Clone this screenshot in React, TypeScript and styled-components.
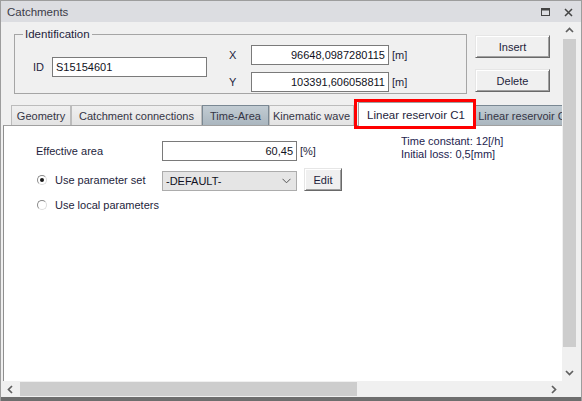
import React from 'react';
import styled, { createGlobalStyle } from 'styled-components';

const Global = createGlobalStyle`
  html, body { margin: 0; padding: 0; background: #ffffff; }
  body { font-family: "Liberation Sans", Arial, sans-serif; font-size: 11px; }
  * { box-sizing: border-box; }
`;

const Window = styled.div`
  width: 582px;
  height: 401px;
  display: flex;
  flex-direction: column;
  background: #f0f0f0;
  border: 1px solid #9d9d9d;
  border-bottom: none;
  overflow: hidden;
`;

const TitleBar = styled.div`
  height: 21px;
  flex-shrink: 0;
  display: flex;
  align-items: center;
  justify-content: space-between;
  padding: 1px 8px 0 6px;
  background: #dcdde1;
  color: #3b3b48;
  font-size: 11.5px;
`;

const TitleButtons = styled.div`
  display: flex;
  align-items: center;
  gap: 14px;
`;

const Middle = styled.div`
  flex: 1;
  min-height: 0;
  display: flex;
`;

const Viewport = styled.div`
  width: 561px;
  flex-shrink: 0;
  overflow: hidden;
  background: #f0f0f0;
`;

const HeaderRow = styled.div`
  display: flex;
  align-items: flex-start;
  padding: 5px 0 0 13px;
`;

const GroupBox = styled.fieldset`
  width: 453px;
  margin: 0;
  padding: 4px 0 1px 0;
  border: 1px solid #a5a5a5;
  min-inline-size: 0;
`;

const Legend = styled.legend`
  margin-left: 8px;
  padding: 0 2px;
  line-height: 14px;
  color: #1e1e3c;
  font-size: 11.5px;
`;

const GroupInner = styled.div`
  display: flex;
  align-items: flex-start;
`;

const IdRow = styled.div`
  display: flex;
  align-items: center;
  margin: 12px 0 0 18px;
`;

const FieldLabel = styled.span`
  color: #1e1e3c;
  white-space: nowrap;
`;

const TextBox = styled.div<{ $w: number; $align?: 'left' | 'right' }>`
  width: ${(p) => p.$w}px;
  height: 20px;
  border: 1px solid #7a7a7a;
  background: #ffffff;
  padding: 0 3px;
  line-height: 18px;
  text-align: ${(p) => p.$align ?? 'left'};
  color: #111122;
  white-space: nowrap;
  overflow: hidden;
`;

const IdBox = styled(TextBox)`
  margin-left: 8px;
`;

const CoordGrid = styled.div`
  display: grid;
  grid-template-columns: 22px 138px auto;
  grid-template-rows: 20px 20px;
  row-gap: 7px;
  align-items: center;
  margin-left: 22px;
`;

const Unit = styled.span`
  margin-left: 3px;
  color: #1e1e3c;
`;

const ButtonColumn = styled.div`
  display: flex;
  flex-direction: column;
  gap: 11px;
  margin: 8px 0 0 8px;
`;

const PushButton = styled.button<{ $w: number }>`
  width: ${(p) => p.$w}px;
  height: 23px;
  padding: 0;
  font: inherit;
  color: #1e1e3c;
  background: #f0f0f0;
  border: 1px solid;
  border-color: #e6e6e6 #696969 #696969 #e6e6e6;
  box-shadow: inset 1px 1px #ffffff, inset -1px -1px #a0a0a0;
`;

const TabControl = styled.div`
  position: relative;
  width: 600px;
  margin: 8px 0 0 2px;
`;

const TabStrip = styled.div`
  height: 23px;
  display: flex;
  align-items: flex-end;
  padding-left: 8px;
`;

type TabKind = 'plain' | 'tinted' | 'active';

const Tab = styled.div<{ $w: number; $kind: TabKind }>`
  flex-shrink: 0;
  width: ${(p) => p.$w}px;
  height: ${(p) => (p.$kind === 'active' ? 24 : 20)}px;
  margin: ${(p) => (p.$kind === 'active' ? '0 1px -1px 4px' : '0')};
  position: relative;
  z-index: ${(p) => (p.$kind === 'active' ? 1 : 0)};
  display: flex;
  align-items: center;
  justify-content: center;
  padding-top: ${(p) => (p.$kind === 'active' ? 0 : 1)}px;
  white-space: nowrap;
  overflow: hidden;
  border: 1px solid;
  border-bottom: none;
  border-color: ${(p) =>
    p.$kind === 'tinted' ? '#7a8893' : p.$kind === 'active' ? '#a0a0a0' : '#bcbcbc'};
  background: ${(p) =>
    p.$kind === 'tinted'
      ? 'linear-gradient(#c2ccd3, #aab6bf)'
      : p.$kind === 'active'
      ? '#ffffff'
      : 'linear-gradient(#f0f0f0, #e3e3e3)'};
  color: ${(p) => (p.$kind === 'active' ? '#1e1e3c' : '#353545')};
  font-size: ${(p) => (p.$kind === 'active' ? '11.5px' : '11px')};
`;

const Highlight = styled.div`
  position: absolute;
  left: 351px;
  top: -3px;
  width: 122px;
  height: 30px;
  border: 3px solid #ff0000;
  z-index: 2;
  pointer-events: none;
`;

const TabPage = styled.div`
  height: 300px;
  background: #ffffff;
  border-top: 1px solid #a0a0a0;
  border-left: 1px solid #8f8f8f;
  display: flex;
  align-items: flex-start;
`;

const FormGrid = styled.div`
  width: 365px;
  margin: 15px 0 0 32px;
  display: grid;
  grid-template-columns: 126px 135px auto;
  grid-template-rows: 20px 23px 14px;
  row-gap: 7px;
  align-items: center;
`;

const RadioOption = styled.label<{ $span?: number }>`
  grid-column: span ${(p) => p.$span ?? 1};
  display: flex;
  align-items: center;
  gap: 8px;
  margin-left: 1px;
  color: #1e1e3c;
  white-space: nowrap;
`;

const RadioCircle = styled.span<{ $checked?: boolean }>`
  width: 10px;
  height: 10px;
  border-radius: 50%;
  border: 1px solid;
  border-color: #8a8a8a #dcdcdc #dcdcdc #8a8a8a;
  background: #ffffff;
  display: inline-flex;
  align-items: center;
  justify-content: center;
  &::after {
    content: '';
    width: 4px;
    height: 4px;
    border-radius: 50%;
    background: ${(p) => (p.$checked ? '#1a1a1a' : 'transparent')};
  }
`;

const Combo = styled.div`
  align-self: end;
  width: 135px;
  height: 20px;
  display: flex;
  align-items: center;
  justify-content: space-between;
  padding: 0 5px 0 3px;
  background: #e5e5e5;
  border: 1px solid #acacac;
  color: #111122;
`;

const TrailCell = styled.div`
  display: flex;
  align-items: center;
`;

const EditButton = styled(PushButton)`
  margin-left: 7px;
`;

const InfoBlock = styled.div`
  margin-top: 9px;
  line-height: 13px;
  color: #24244f;
`;

const VScroll = styled.div`
  width: 19px;
  flex-shrink: 0;
  display: flex;
  flex-direction: column;
  padding: 0 5px 0 1px;
  background: #f0f0f0;
`;

const ArrowCell = styled.div<{ $size: number }>`
  flex: 0 0 ${(p) => p.$size}px;
  display: flex;
  align-items: center;
  justify-content: center;
`;

const VThumb = styled.div`
  height: 308px;
  flex-shrink: 0;
  background: #cdcdcd;
`;

const Track = styled.div`
  flex: 1;
`;

const BottomRow = styled.div`
  height: 16px;
  flex-shrink: 0;
  display: flex;
`;

const HScroll = styled.div`
  width: 561px;
  display: flex;
  padding: 1px 0 1px 0;
  background: #f0f0f0;
`;

const HThumb = styled.div`
  width: 337px;
  flex-shrink: 0;
  background: #cdcdcd;
`;

const Corner = styled.div`
  flex: 1;
  background: #f0f0f0;
`;

const BottomEdge = styled.div`
  height: 4px;
  flex-shrink: 0;
  margin: 0 -1px;
  background: #6e6e6e;
`;

type Dir = 'up' | 'down' | 'left' | 'right';

const CHEVRONS: Record<Dir, string> = {
  up: '1,6 4.5,2.5 8,6',
  down: '1,3 4.5,6.5 8,3',
  left: '6,1 2.5,4.5 6,8',
  right: '3,1 6.5,4.5 3,8',
};

const Chevron = ({ dir }: { dir: Dir }) => (
  <svg width={9} height={9} viewBox="0 0 9 9">
    <polyline points={CHEVRONS[dir]} fill="none" stroke="#5f5f5f" strokeWidth={1.7} />
  </svg>
);

const ComboArrow = () => (
  <svg width={9} height={6} viewBox="0 0 9 6">
    <polyline points="0.5,0.8 4.5,4.8 8.5,0.8" fill="none" stroke="#555555" strokeWidth={1} />
  </svg>
);

const MaximizeIcon = () => (
  <svg width={9} height={8} viewBox="0 0 9 8">
    <rect x={0.5} y={0.5} width={8} height={7} fill="none" stroke="#444" strokeWidth={1} />
    <line x1={0} y1={1.5} x2={9} y2={1.5} stroke="#444" strokeWidth={2} />
  </svg>
);

const CloseIcon = () => (
  <svg width={9} height={9} viewBox="0 0 9 9">
    <path d="M1 1 L8 8 M8 1 L1 8" stroke="#444" strokeWidth={1.5} />
  </svg>
);

const tabs: { label: string; width: number; kind: TabKind }[] = [
  { label: 'Geometry', width: 60, kind: 'plain' },
  { label: 'Catchment connections', width: 131, kind: 'plain' },
  { label: 'Time-Area', width: 67, kind: 'tinted' },
  { label: 'Kinematic wave', width: 85, kind: 'plain' },
  { label: 'Linear reservoir C1', width: 116, kind: 'active' },
  { label: 'Linear reservoir C2', width: 100, kind: 'tinted' },
];

export default function App() {
  return (
    <>
      <Global />
      <Window>
        <TitleBar>
          <span>Catchments</span>
          <TitleButtons>
            <MaximizeIcon />
            <CloseIcon />
          </TitleButtons>
        </TitleBar>

        <Middle>
          <Viewport>
            <HeaderRow>
              <GroupBox>
                <Legend>Identification</Legend>
                <GroupInner>
                  <IdRow>
                    <FieldLabel>ID</FieldLabel>
                    <IdBox $w={155}>S15154601</IdBox>
                  </IdRow>
                  <CoordGrid>
                    <FieldLabel>X</FieldLabel>
                    <TextBox $w={138} $align="right">96648,0987280115</TextBox>
                    <Unit>[m]</Unit>
                    <FieldLabel>Y</FieldLabel>
                    <TextBox $w={138} $align="right">103391,606058811</TextBox>
                    <Unit>[m]</Unit>
                  </CoordGrid>
                </GroupInner>
              </GroupBox>
              <ButtonColumn>
                <PushButton $w={75}>Insert</PushButton>
                <PushButton $w={75}>Delete</PushButton>
              </ButtonColumn>
            </HeaderRow>

            <TabControl>
              <TabStrip>
                {tabs.map((t) => (
                  <Tab key={t.label} $w={t.width} $kind={t.kind}>
                    {t.label}
                  </Tab>
                ))}
              </TabStrip>
              <Highlight />
              <TabPage>
                <FormGrid>
                  <FieldLabel>Effective area</FieldLabel>
                  <TextBox $w={135} $align="right">60,45</TextBox>
                  <Unit>[%]</Unit>

                  <RadioOption>
                    <RadioCircle $checked />
                    Use parameter set
                  </RadioOption>
                  <Combo>
                    <span>-DEFAULT-</span>
                    <ComboArrow />
                  </Combo>
                  <TrailCell>
                    <EditButton $w={38}>Edit</EditButton>
                  </TrailCell>

                  <RadioOption $span={3}>
                    <RadioCircle />
                    Use local parameters
                  </RadioOption>
                </FormGrid>
                <InfoBlock>
                  <div>Time constant: 12[/h]</div>
                  <div>Initial loss: 0,5[mm]</div>
                </InfoBlock>
              </TabPage>
            </TabControl>
          </Viewport>

          <VScroll>
            <ArrowCell $size={17}>
              <Chevron dir="up" />
            </ArrowCell>
            <VThumb />
            <Track />
            <ArrowCell $size={17}>
              <Chevron dir="down" />
            </ArrowCell>
          </VScroll>
        </Middle>

        <BottomRow>
          <HScroll>
            <ArrowCell $size={19}>
              <Chevron dir="left" />
            </ArrowCell>
            <HThumb />
            <Track />
            <ArrowCell $size={17}>
              <Chevron dir="right" />
            </ArrowCell>
          </HScroll>
          <Corner />
        </BottomRow>
        <BottomEdge />
      </Window>
    </>
  );
}
